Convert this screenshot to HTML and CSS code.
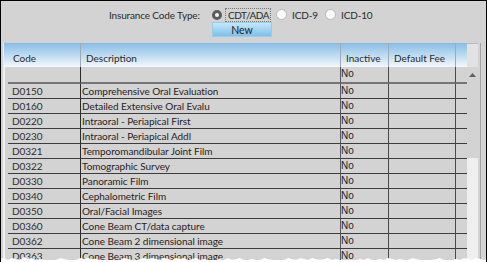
FILE: index.html
```html
<!DOCTYPE html>
<html>
<head>
<meta charset="utf-8">
<link rel="stylesheet" href="styles.css">
</head>
<body>
<div class="top">
  <div class="type-row">
    <span class="label">Insurance Code Type:</span>
    <label class="radio r1"><span class="dot sel"></span><span class="rtext focus">CDT/ADA</span></label>
    <label class="radio r2"><span class="dot"></span><span class="rtext">ICD-9</span></label>
    <label class="radio"><span class="dot"></span><span class="rtext">ICD-10</span></label>
  </div>
  <div class="btn-row"><button class="new">New</button></div>
</div>
<div class="grid">
  <div class="table">
    <div class="row head">
      <div class="hc hcode">Code</div>
      <div class="hc">Description</div>
      <div class="hc">Inactive</div>
      <div class="hc">Default Fee</div>
      <div class="hc last"></div>
    </div>
    <div class="row newrow">
      <div class="rh"></div><div class="c code"></div><div class="c desc"></div><div class="c inact">No</div><div class="c fee"></div><div class="c last"></div>
    </div>
    <div class="row"><div class="rh"></div><div class="c code">D0150</div><div class="c desc">Comprehensive Oral Evaluation</div><div class="c inact">No</div><div class="c fee"></div><div class="c last"></div></div>
    <div class="row"><div class="rh"></div><div class="c code">D0160</div><div class="c desc">Detailed Extensive Oral Evalu</div><div class="c inact">No</div><div class="c fee"></div><div class="c last"></div></div>
    <div class="row"><div class="rh"></div><div class="c code">D0220</div><div class="c desc">Intraoral - Periapical First</div><div class="c inact">No</div><div class="c fee"></div><div class="c last"></div></div>
    <div class="row"><div class="rh"></div><div class="c code">D0230</div><div class="c desc">Intraoral - Periapical Addl</div><div class="c inact">No</div><div class="c fee"></div><div class="c last"></div></div>
    <div class="row"><div class="rh"></div><div class="c code">D0321</div><div class="c desc">Temporomandibular Joint Film</div><div class="c inact">No</div><div class="c fee"></div><div class="c last"></div></div>
    <div class="row"><div class="rh"></div><div class="c code">D0322</div><div class="c desc">Tomographic Survey</div><div class="c inact">No</div><div class="c fee"></div><div class="c last"></div></div>
    <div class="row"><div class="rh"></div><div class="c code">D0330</div><div class="c desc">Panoramic Film</div><div class="c inact">No</div><div class="c fee"></div><div class="c last"></div></div>
    <div class="row"><div class="rh"></div><div class="c code">D0340</div><div class="c desc">Cephalometric Film</div><div class="c inact">No</div><div class="c fee"></div><div class="c last"></div></div>
    <div class="row"><div class="rh"></div><div class="c code">D0350</div><div class="c desc">Oral/Facial Images</div><div class="c inact">No</div><div class="c fee"></div><div class="c last"></div></div>
    <div class="row"><div class="rh"></div><div class="c code">D0360</div><div class="c desc">Cone Beam CT/data capture</div><div class="c inact">No</div><div class="c fee"></div><div class="c last"></div></div>
    <div class="row"><div class="rh"></div><div class="c code">D0362</div><div class="c desc">Cone Beam 2 dimensional image</div><div class="c inact">No</div><div class="c fee"></div><div class="c last"></div></div>
    <div class="row"><div class="rh"></div><div class="c code">D0363</div><div class="c desc">Cone Beam 3 dimensional image</div><div class="c inact">No</div><div class="c fee"></div><div class="c last"></div></div>
  </div>
  <div class="vscroll">
    <div class="corner"></div>
    <div class="up"><svg width="7" height="4" viewBox="0 0 7 4"><polygon points="0,4 7,4 3.5,0" fill="#606060"/></svg></div>
    <div class="track"></div>
    <div class="thumb"></div>
  </div>
  <div class="edge"></div>
</div>
<svg class="torn" width="487" height="7" viewBox="0 0 487 7"><polygon fill="#fff" points="0,4 4,3 8,5 12,3 16,4 20,5 24,2 28,4 32,3 36,5 40,4 44,5 48,5 52,5 56,5 60,3 64,4 68,5 72,5 76,5 80,3 84,4 88,3 92,4 96,4 100,5 104,5 108,5 112,5 116,5 120,5 124,3 128,4 132,5 136,5 140,4 144,3 148,4 152,3 156,4 160,5 164,3 168,4 172,5 176,3 180,4 184,3 188,5 192,4 196,3 200,5 204,4 208,5 212,5 216,5 220,4 224,5 228,3 232,5 236,4 240,3 244,5 248,5 252,4 256,5 260,5 264,3 268,4 272,5 276,5 280,5 284,5 288,3 292,4 296,5 300,3 304,4 308,5 312,3 316,4 320,5 324,4 328,3 332,5 336,4 340,5 344,5 348,5 352,5 356,5 360,4 364,5 368,3 372,5 376,5 380,4 384,5 388,3 392,4 396,5 400,4 404,5 408,5 412,3 416,4 420,5 424,5 428,5 432,5 436,4 440,3 444,5 448,5 452,5 456,4 460,5 464,3 468,4 472,5 476,3 480,4 484,5 487,4 487,7 0,7"/></svg>
</body>
</html>
```

FILE: styles.css
```css
* { box-sizing: border-box; margin: 0; padding: 0; }
html, body { width: 487px; height: 262px; overflow: hidden; }
body {
  background: #d3d3d3;
  font-family: Lato, "Noto Sans", sans-serif;
  font-size: 10px;
  color: #222;
  border: 1px solid #000;
  border-bottom: none;
  position: relative;
}
.top { padding-top: 6px; }
.type-row {
  display: flex;
  align-items: center;
  height: 15px;
  padding-left: 108px;
  font-size: 10px;
  letter-spacing: -0.15px;
  color: #2a2a2a;
  white-space: nowrap;
}
.label { width: 103px; flex: none; }
.radio { display: flex; align-items: center; flex: none; }
.radio.r1 { width: 64px; }
.radio.r2 { width: 49px; }
.dot {
  width: 11px; height: 11px;
  border-radius: 50%;
  border: 1px solid #b8b8b8;
  background: #fafafa;
  margin-right: 5px;
  flex: none;
}
.dot.sel {
  width: 10px; height: 10px;
  border: 3px solid #5c5c5c;
  background: #f4f4f4;
  margin-right: 4px;
}
.focus { outline: 1px dotted #777; padding: 0 1px 0 2px; line-height: 12px; letter-spacing: -0.45px; }
.btn-row { padding-left: 211px; height: 15px; }
.new {
  width: 60px; height: 15px;
  border: 1px solid #9ccbe6;
  background: linear-gradient(#c6e7f9, #7cc0ea);
  font-family: Lato, "Noto Sans", sans-serif;
  font-size: 10.5px;
  color: #222;
  line-height: 12px;
}
.grid {
  margin-top: 6px;
  margin-left: 2px;
  width: 478px;
  height: 219px;
  display: flex;
  border-left: 1px solid #ececec;
  border-right: 1px solid #a2a2a2;
}
.table { width: 463px; flex: none; }
.row {
  display: grid;
  grid-template-columns: 4px 73px 260px 48px 67px 11px;
  height: 15px;
}
.row.head {
  grid-template-columns: 77px 260px 48px 67px 11px;
  height: 24px;
  background: linear-gradient(#86bde6, #f4f8fb);
}
.hc {
  border-right: 1px solid #9eaab6;
  padding: 9px 0 0 5px;
  color: #2a2a2a;
  white-space: nowrap;
}
.hc.hcode { padding-left: 9px; }
.hc.last { border-right: none; }
.row.newrow { height: 17px; }
.rh { border-left: 1px solid #f2f2f2; }
.c {
  border-bottom: 1px solid #3c3c3c;
  border-right: 1px solid #4a4a4a;
  line-height: 14px;
  white-space: nowrap;
  overflow: hidden;
  letter-spacing: -0.05px;
}
.newrow .c { border-bottom: 2px solid #757575; }
.c.code { padding-left: 4px; border-right-color: #2a2a2a; color: #2e2e2e; }
.c.desc { padding-left: 1px; border-right-color: #5a5a5a; color: #2a2222; }
.c.inact { font-family: "Liberation Sans", Arial, sans-serif; font-size: 10px; color: #1e1e2a; letter-spacing: 0; }
.c.last { border-right: none; }
.vscroll { width: 11px; flex: none; display: flex; flex-direction: column; }
.corner { height: 24px; background: #e2e2e2; border-top: 1px solid #b8b8b8; }
.up { height: 16px; display: flex; align-items: center; justify-content: center; }
.track { height: 75px; }
.thumb { flex: 1; background: #efefef; }
.edge { flex: 1; }
.torn { position: absolute; left: -1px; bottom: 0; display: block; }
```
